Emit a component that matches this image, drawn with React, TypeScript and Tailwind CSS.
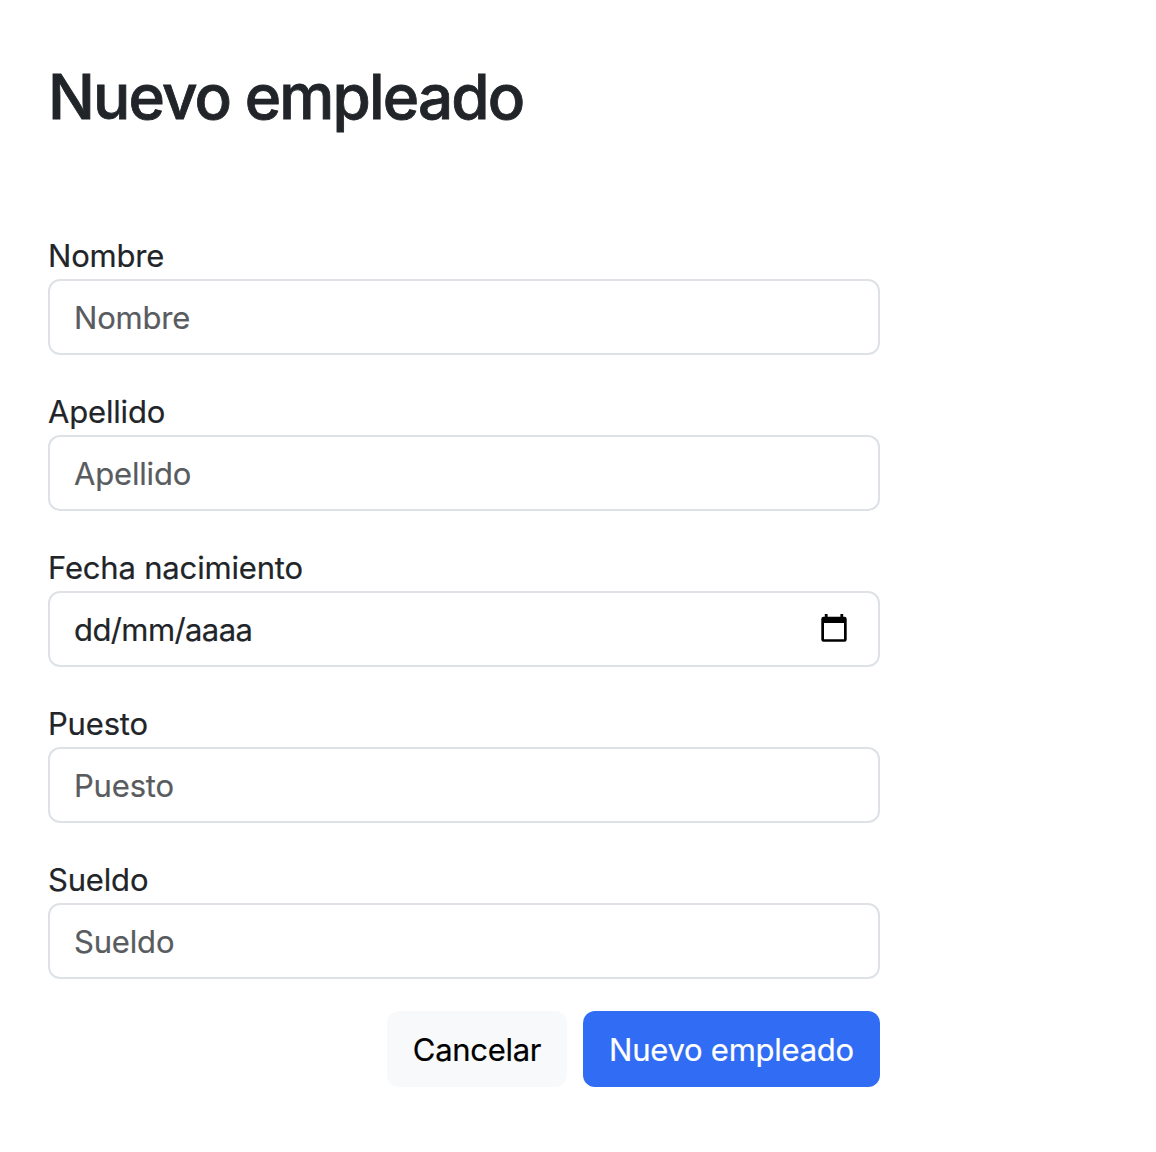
import React from "react";

const fields = [
  { label: "Nombre" },
  { label: "Apellido" },
  { label: "Fecha nacimiento", date: true },
  { label: "Puesto" },
  { label: "Sueldo" },
];

function CalendarIcon() {
  return (
    <svg className="mb-0.5" width="26" height="28" viewBox="0 0 26 28" aria-hidden="true">
      <path
        fillRule="evenodd"
        fill="#000"
        d="M3.800 0h2.800v2.700h12.800V0h2.800v2.700h1.300a2.200 2.200 0 0 1 2.200 2.200v20.600a2.200 2.200 0 0 1-2.200 2.200h-21a2.200 2.200 0 0 1-2.200-2.200V4.900a2.200 2.200 0 0 1 2.200-2.200h1.300zM3 9V25.200h20V9z"
      />
    </svg>
  );
}

export default function App() {
  return (
    <main className="min-h-[1152px] bg-white px-12 pt-[59px] font-[Inter,sans-serif] text-[31px] tracking-[-0.18px] text-[#212529] [-webkit-text-stroke:0.2px]">
      <h1 className="h-[76px] text-[62px] leading-[76px] font-medium tracking-[-1.85px] whitespace-nowrap [-webkit-text-stroke:0.8px]">Nuevo empleado</h1>
      <form className="mt-24 w-[832px]">
        {fields.map((f) => (
          <div key={f.label} className="mb-8">
            <label className="block h-12 leading-[50px]">{f.label}</label>
            {f.date ? (
              <div className="flex h-[76px] items-center justify-between rounded-xl border-2 border-[#dee2e6] pr-[31px] pl-6">
                <span className="pt-0.5 tracking-[-0.6px]">dd/mm/aaaa</span>
                <CalendarIcon />
              </div>
            ) : (
              <input
                placeholder={f.label}
                className="block h-[76px] w-full rounded-xl border-2 border-[#dee2e6] px-6 placeholder:text-[#595c5f]"
              />
            )}
          </div>
        ))}
        <div className="flex justify-end gap-4">
          <button type="button" className="h-[76px] w-[180px] rounded-xl bg-[#f8f9fa] pt-0.5 tracking-[-0.3px] text-black">Cancelar</button>
          <button type="button" className="h-[76px] w-[297px] rounded-xl bg-[#316cf4] pt-0.5 tracking-[-0.25px] text-white">Nuevo empleado</button>
        </div>
      </form>
    </main>
  );
}
